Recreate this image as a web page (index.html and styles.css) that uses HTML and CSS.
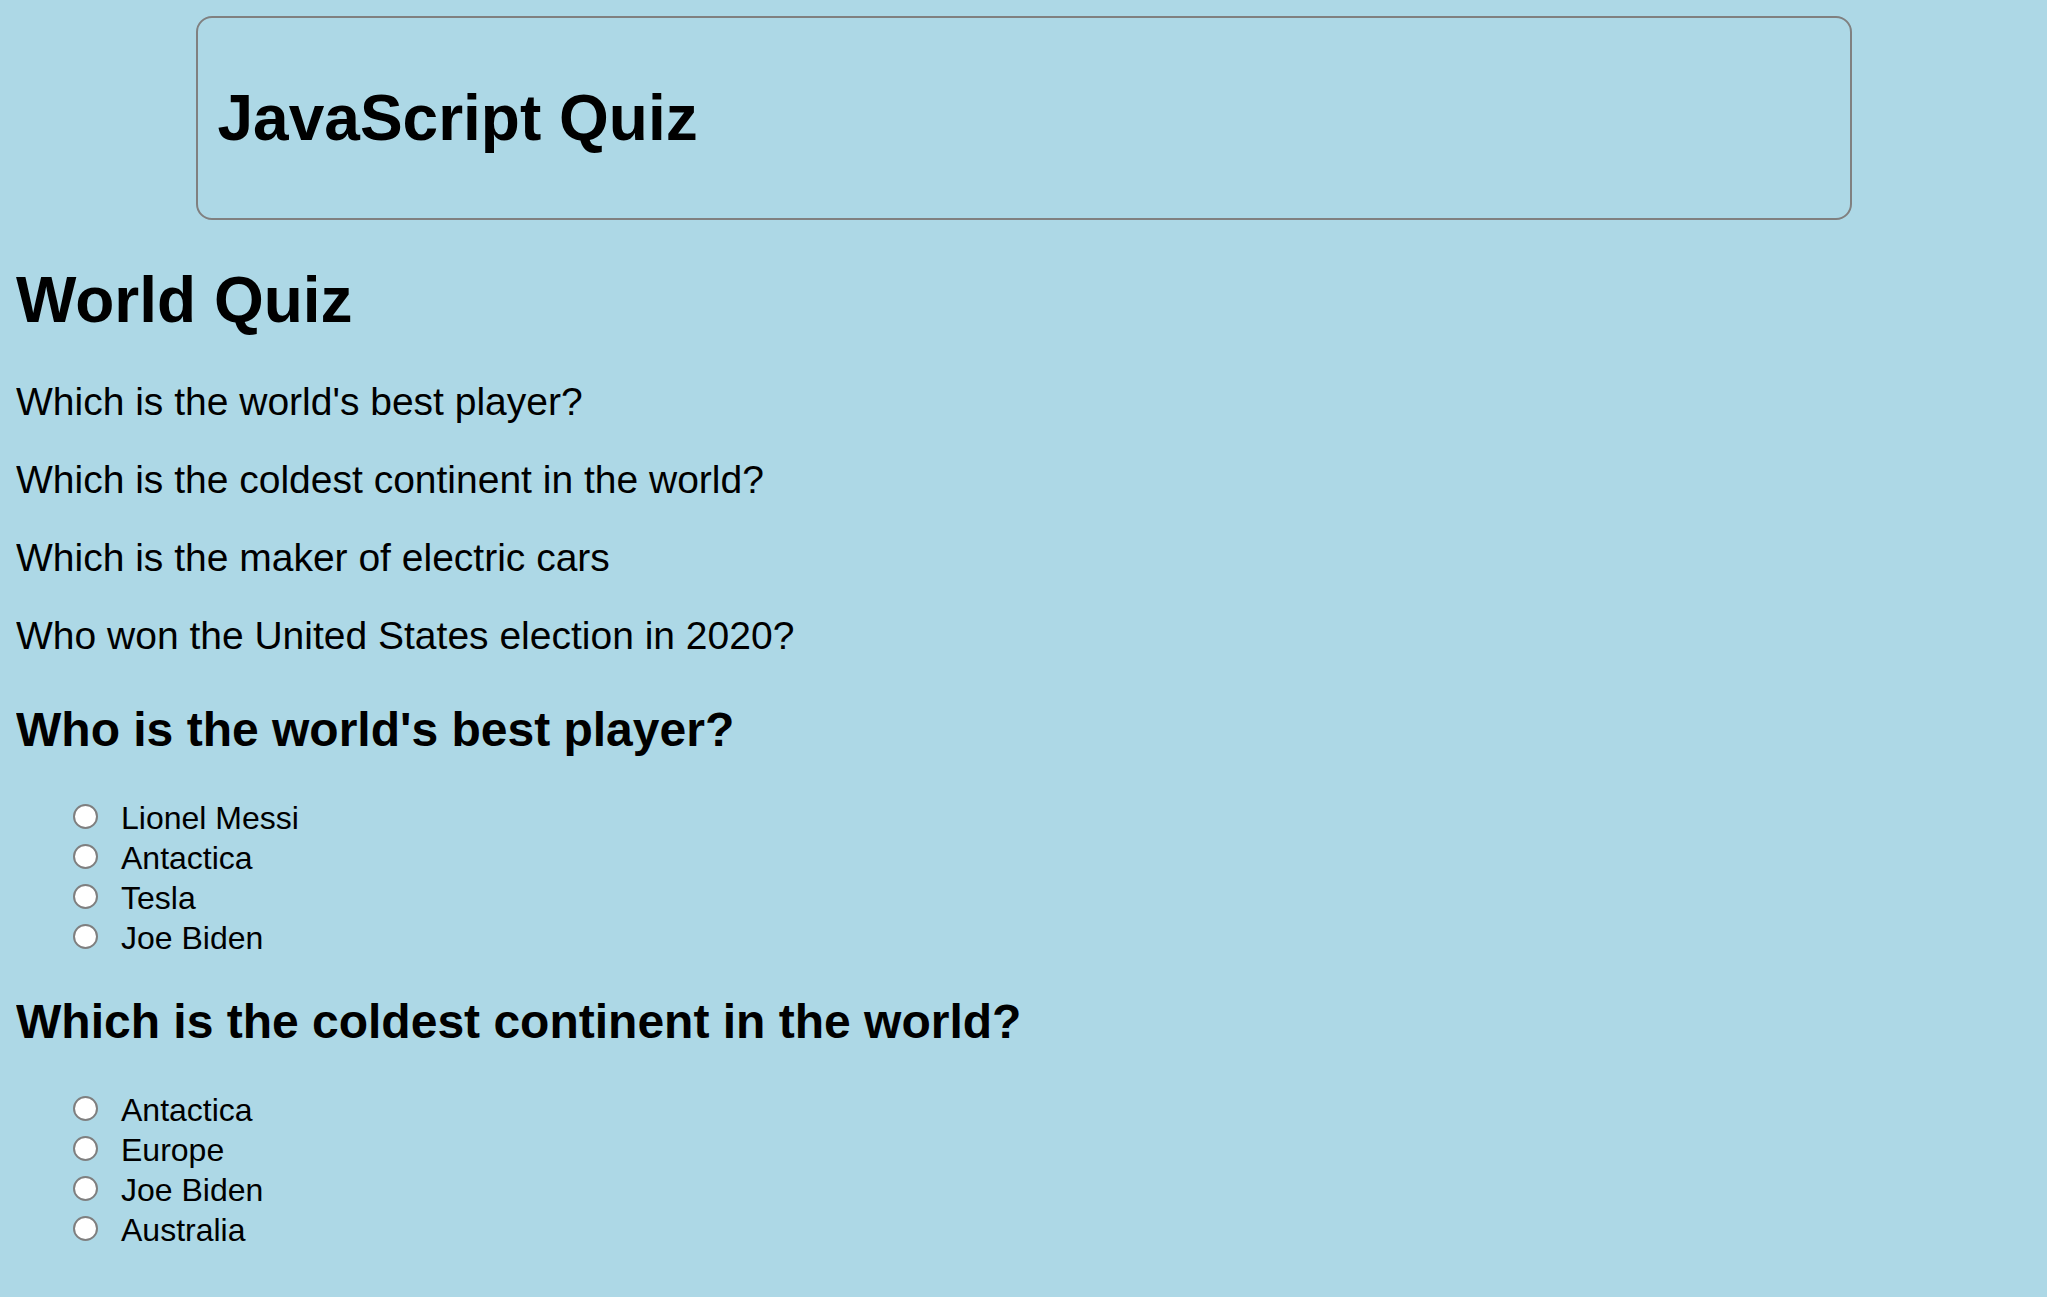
FILE: index.html
```html
<!DOCTYPE html>
<html lang="en">
<head>
<meta charset="utf-8">
<title>JavaScript Quiz</title>
<link rel="stylesheet" href="styles.css">
</head>
<body>
<header class="banner">
  <h1 class="banner-title">JavaScript Quiz</h1>
</header>
<main class="quiz">
  <h1 class="quiz-title">World Quiz</h1>
  <div class="question-list">
    <p class="question-text">Which is the world's best player?</p>
    <p class="question-text">Which is the coldest continent in the world?</p>
    <p class="question-text">Which is the maker of electric cars</p>
    <p class="question-text">Who won the United States election in 2020?</p>
  </div>
  <section class="question">
    <h2 class="question-heading">Who is the world's best player?</h2>
    <ul class="options">
      <li class="option"><input class="option-input" type="radio" name="q1" id="q1a"><label class="option-label" for="q1a">Lionel Messi</label></li>
      <li class="option"><input class="option-input" type="radio" name="q1" id="q1b"><label class="option-label" for="q1b">Antactica</label></li>
      <li class="option"><input class="option-input" type="radio" name="q1" id="q1c"><label class="option-label" for="q1c">Tesla</label></li>
      <li class="option"><input class="option-input" type="radio" name="q1" id="q1d"><label class="option-label" for="q1d">Joe Biden</label></li>
    </ul>
  </section>
  <section class="question">
    <h2 class="question-heading">Which is the coldest continent in the world?</h2>
    <ul class="options">
      <li class="option"><input class="option-input" type="radio" name="q2" id="q2a"><label class="option-label" for="q2a">Antactica</label></li>
      <li class="option"><input class="option-input" type="radio" name="q2" id="q2b"><label class="option-label" for="q2b">Europe</label></li>
      <li class="option"><input class="option-input" type="radio" name="q2" id="q2c"><label class="option-label" for="q2c">Joe Biden</label></li>
      <li class="option"><input class="option-input" type="radio" name="q2" id="q2d"><label class="option-label" for="q2d">Australia</label></li>
    </ul>
  </section>
</main>
</body>
</html>
```

FILE: styles.css
```css
html {
  background: #add8e6;
}

body {
  margin: 16px;
  background: #add8e6;
  color: #000;
  font-family: "Liberation Sans", Arial, sans-serif;
}

.banner {
  width: 80%;
  margin: 0 auto;
  padding: 20px;
  border: 2px solid #808080;
  border-radius: 16px;
}

.banner-title,
.quiz-title {
  font-size: 64px;
  font-weight: bold;
  margin: 0.67em 0;
}

.question-list {
  margin-bottom: 44px;
}

.question-text {
  font-size: 39px;
  margin: 34px 0;
}

.question-heading {
  font-size: 48px;
  font-weight: bold;
  margin: 0.83em 0 38px;
}

.options {
  list-style: none;
  margin: 0;
  padding-left: 57px;
}

.option {
  font-size: 32px;
  line-height: 34px;
  padding-top: 6px;
}

.option-input {
  -webkit-appearance: none;
  appearance: none;
  box-sizing: border-box;
  width: 25px;
  height: 25px;
  margin: 3px 0 0 0;
  vertical-align: baseline;
  border: 2px solid #7f7f7f;
  border-radius: 50%;
  background: #fff;
}

.option-label {
  margin-left: 23px;
}
```
